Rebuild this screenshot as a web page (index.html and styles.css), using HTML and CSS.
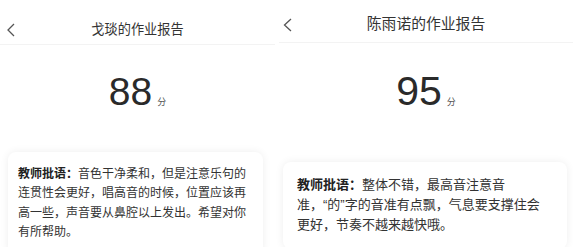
FILE: index.html
```html
<!DOCTYPE html>
<html lang="zh-CN">
<head>
    <meta charset="UTF-8">
    <meta name="viewport" content="width=device-width, initial-scale=1.0">
    <title>作业报告</title>
    <link rel="stylesheet" href="styles.css">
</head>
<body>
    <div class="screens">
        <section class="report report-left">
            <header class="nav">
                <span class="back">
                    <svg width="8" height="14" viewBox="0 0 8 14"><polyline points="7,1 1,7 7,13" fill="none" stroke="#555" stroke-width="1.3"/></svg>
                </span>
                <h1 class="nav-title">戈琰的作业报告</h1>
            </header>
            <div class="score">
                <span class="score-num">88</span><span class="score-unit">分</span>
            </div>
            <div class="comment">
                <p><b>教师批语：</b>音色干净柔和，但是注意乐句的连贯性会更好，唱高音的时候，位置应该再高一些，声音要从鼻腔以上发出。希望对你有所帮助。</p>
            </div>
        </section>

        <section class="report report-right">
            <header class="nav">
                <span class="back">
                    <svg width="9" height="14" viewBox="0 0 9 14"><polyline points="8,1 1.5,7 8,13" fill="none" stroke="#555" stroke-width="1.3"/></svg>
                </span>
                <h1 class="nav-title">陈雨诺的作业报告</h1>
            </header>
            <div class="score">
                <span class="score-num">95</span><span class="score-unit">分</span>
            </div>
            <div class="comment">
                <p><b>教师批语：</b>整体不错，最高音注意音<br>准，“的”字的音准有点飘，气息要支撑住会更好，节奏不越来越快哦。</p>
            </div>
        </section>
    </div>
</body>
</html>
```

FILE: styles.css
```css
html, body {
    margin: 0;
    padding: 0;
    background-color: #fff;
}
body {
    font-family: "Liberation Sans", "Noto Sans CJK SC", sans-serif;
    color: #333;
}
.screens {
    display: flex;
    gap: 4px;
    height: 247px;
    overflow: hidden;
}
.report {
    flex: none;
}
.report-left {
    width: 275px;
}
.report-right {
    width: 294px;
}

/* top bar */
.nav {
    display: grid;
    grid-template-columns: 1fr auto 1fr;
    align-items: center;
    border-bottom: 1px solid #f3f3f3;
}
.back {
    display: flex;
    align-items: center;
}
.back svg {
    display: block;
}
.nav-title {
    margin: 0;
    font-weight: normal;
    color: #333;
}
.report-left .nav {
    padding-top: 15px;
    height: 29px;
}
.report-left .back {
    padding-left: 7px;
}
.report-left .nav-title {
    font-size: 13.2px;
    line-height: 29px;
}
.report-right .nav {
    padding-top: 7px;
    height: 35px;
}
.report-right .back {
    padding-left: 4px;
}
.report-right .nav-title {
    font-size: 14.8px;
    line-height: 35px;
}

/* score */
.score {
    display: flex;
    justify-content: center;
    align-items: baseline;
    color: #2a2a2a;
}
.score-num {
    line-height: 1;
}
.score-unit {
    font-size: 9px;
    color: #555;
    margin-left: 5px;
}
.report-left .score {
    margin-top: 27px;
}
.report-left .score-num {
    font-size: 39px;
}
.report-right .score {
    margin-top: 28px;
}
.report-right .score-num {
    font-size: 41px;
}

/* teacher comment card */
.comment {
    background-color: #fff;
    border-radius: 8px;
    box-shadow: 0 0 8px rgba(0, 0, 0, 0.07);
}
.comment p {
    margin: 0;
    color: #333;
}
.comment b {
    color: #222;
}
.report-left .comment {
    margin: 41px 12px 0 8px;
    padding: 13px 15px 14px 10px;
}
.report-left .comment p {
    font-size: 12px;
    line-height: 19.3px;
}
.report-right .comment {
    margin: 50px 6px 0 4px;
    padding: 13px 20px 14px 14px;
}
.report-right .comment p {
    font-size: 13px;
    line-height: 20px;
}
```
